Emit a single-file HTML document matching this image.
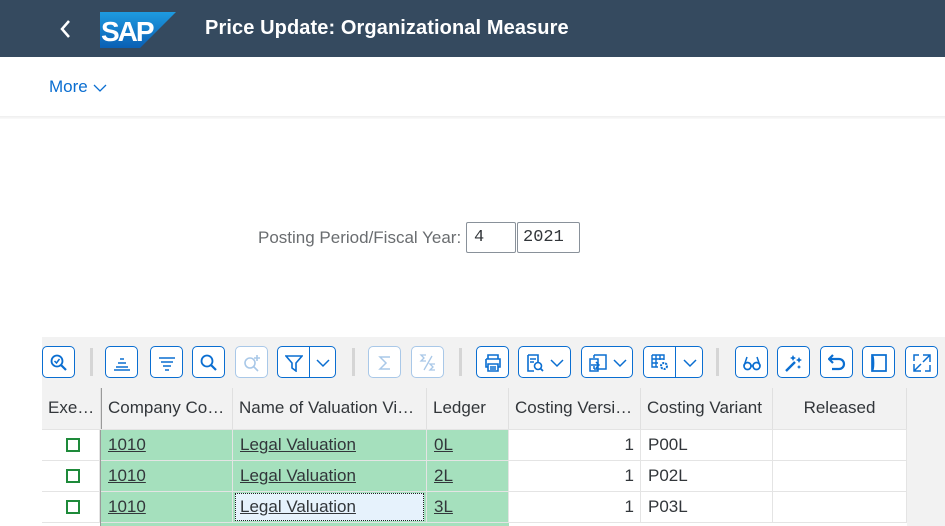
<!DOCTYPE html>
<html><head><meta charset="utf-8"><style>
*{box-sizing:border-box;margin:0;padding:0}
html,body{width:945px;height:526px;overflow:hidden}
body{background:#fff;font-family:"Liberation Sans",sans-serif;position:relative}
.a{position:absolute}
.hdr{left:0;top:0;width:945px;height:57px;background:#354a5f}
.btn{position:absolute;top:346px;height:32px;border:1px solid #0a6ed1;border-radius:5px;background:#fff;color:#0a6ed1}
.btn.dis{border-color:#a9c8e8;color:#a9c8e8}
.btn svg{position:absolute;left:7px;top:7px}
.sep{position:absolute;top:348px;width:3px;height:28px;background:#d5d5d5}
.th{position:absolute;top:388px;height:42px;border-right:1px solid #e0e0e0;font-size:17px;color:#32363a;line-height:40px;padding-left:6px;background:#f2f2f2;white-space:nowrap;overflow:hidden}
.td{position:absolute;height:31px;border-right:1px solid #e4e4e4;border-bottom:1px solid #e4e4e4;font-size:17px;color:#32363a;line-height:30px;padding-left:7px;white-space:nowrap}
.g{background:#a5e0bd}
.g u{color:#32363a}
.cb{position:absolute;left:24px;top:8px;width:14px;height:14px;border:2px solid #1e8a3a}
</style></head><body>
<div class="a hdr"></div>
<svg class="a" style="left:58px;top:19px" width="14" height="20"><path d="M11 2 L4 10 L11 18" stroke="#fff" stroke-width="2.5" fill="none"/></svg>
<svg class="a" style="left:100px;top:12px" width="76" height="36"><defs><linearGradient id="gr" x1="0" y1="0" x2="0" y2="1"><stop offset="0" stop-color="#1e9be0"/><stop offset="1" stop-color="#0a5fb4"/></linearGradient></defs><path d="M0 0 H76 L40 36 H0Z" fill="url(#gr)"/><text x="1" y="29" font-family="Liberation Sans" font-weight="bold" font-size="28" fill="#fff" letter-spacing="-2">SAP</text></svg>
<div class="a" style="left:205px;top:17px;color:#fff;font-weight:bold;font-size:20px;letter-spacing:0.1px">Price Update: Organizational Measure</div>
<div class="a" style="left:49px;top:77px;color:#0a6ed1;font-size:17px">More</div>
<svg class="a" style="left:93px;top:83px" width="14" height="10"><path d="M1 2 L7 8 L13 2" stroke="#0a6ed1" stroke-width="1.3" fill="none"/></svg>
<div class="a" style="left:0;top:116px;width:945px;height:3px;background:linear-gradient(#eee,#fafafa)"></div>
<div class="a" style="left:258px;top:228px;font-size:17px;color:#6a6d70">Posting Period/Fiscal Year:</div>
<div class="a" style="left:466px;top:222px;width:50px;height:31px;border:1px solid #89919a;border-radius:2px;font-family:'Liberation Mono',monospace;font-size:17px;line-height:29px;padding-left:7px;color:#32363a">4</div>
<div class="a" style="left:517px;top:222px;width:63px;height:31px;border:1px solid #89919a;border-radius:2px;font-family:'Liberation Mono',monospace;font-size:17px;line-height:29px;padding-left:5px;color:#32363a">2021</div>
<div class="a" style="left:42px;top:337px;width:903px;height:51px;background:#f2f2f2"></div>
<div class="btn" style="left:42px;width:33px"><svg width="18" height="18"><circle cx="7" cy="7" r="5.5" stroke="currentColor" stroke-width="1.8" fill="none"/><path d="M11 11 L16 16" stroke="currentColor" stroke-width="2.2"/><path d="M4.5 7 L6.5 9 L9.5 5" stroke="currentColor" stroke-width="1.5" fill="none"/></svg></div>
<div class="sep" style="left:90px"></div>
<div class="btn" style="left:105px;width:33px"><svg width="18" height="18"><path d="M7 5h4M5 9h8M3 13h12M1 16h16" stroke="currentColor" stroke-width="1.6"/></svg></div>
<div class="btn" style="left:150px;width:33px"><svg width="18" height="18"><path d="M1 4h16M3 8h12M5 12h8M7 16h4" stroke="currentColor" stroke-width="1.6"/></svg></div>
<div class="btn" style="left:192px;width:33px"><svg width="18" height="18"><circle cx="7" cy="7" r="5.5" stroke="currentColor" stroke-width="1.8" fill="none"/><path d="M11 11 L16 16" stroke="currentColor" stroke-width="2.2"/></svg></div>
<div class="btn dis" style="left:235px;width:33px"><svg width="18" height="18"><circle cx="7" cy="9" r="5" stroke="currentColor" stroke-width="1.6" fill="none"/><path d="M10.5 12.5 L15 17M14 1v6M11 4h6" stroke="currentColor" stroke-width="1.6"/></svg></div>
<div class="btn" style="left:277px;width:59px"><svg width="18" height="18"><path d="M1 2h16l-6 7v8l-4-3V9Z" stroke="currentColor" stroke-width="1.6" fill="none"/></svg><div class="a" style="left:31px;top:0;width:1px;height:30px;background:#0a6ed1"></div><svg style="left:36px" width="18" height="18"><path d="M3 6l6 6 6-6" stroke="currentColor" stroke-width="1.5" fill="none"/></svg></div>
<div class="sep" style="left:352px"></div>
<div class="btn dis" style="left:368px;width:33px"><svg width="18" height="18"><path d="M14 3H4l6 6-6 6h10" stroke="currentColor" stroke-width="1.5" fill="none"/></svg></div>
<div class="btn dis" style="left:411px;width:33px"><svg width="18" height="18"><path d="M7 1H2l3 3-3 3h5M13 2 5 16M16 10h-5l3 3-3 3h5" stroke="currentColor" stroke-width="1.3" fill="none"/></svg></div>
<div class="sep" style="left:459px"></div>
<div class="btn" style="left:476px;width:33px"><svg width="18" height="18"><path d="M4 5V1h10v4M2 5h14v8h-2M4 13H2V5M4 10h10v7H4z M6 13h6M6 15h6" stroke="currentColor" stroke-width="1.6" fill="none"/></svg></div>
<div class="btn" style="left:518px;width:53px"><svg width="18" height="18"><path d="M2 1h10v7M2 1v16h6M4 5h6M4 8h4" stroke="currentColor" stroke-width="1.6" fill="none"/><circle cx="12" cy="12" r="3.5" stroke="currentColor" stroke-width="1.6" fill="none"/><path d="M14.5 14.5 17 17" stroke="currentColor" stroke-width="1.8"/></svg><svg style="left:29px" width="18" height="18"><path d="M3 6l6 6 6-6" stroke="currentColor" stroke-width="1.5" fill="none"/></svg></div>
<div class="btn" style="left:581px;width:52px"><svg width="18" height="18"><path d="M5 1h12v14H5M5 1v3M5 12v3M1 5h8v12H1z M7 8l3 3-3 3M2 11h8" stroke="currentColor" stroke-width="1.5" fill="none"/></svg><svg style="left:29px" width="18" height="18"><path d="M3 6l6 6 6-6" stroke="currentColor" stroke-width="1.5" fill="none"/></svg></div>
<div class="btn" style="left:643px;width:60px"><svg width="20" height="18"><path d="M1 1h12v5M1 1v12h6M1 5h12M1 9h6M5 1v12M9 1v5" stroke="currentColor" stroke-width="1.4" fill="none"/><circle cx="13" cy="12" r="3" stroke="currentColor" stroke-width="2" fill="none" stroke-dasharray="2 1"/></svg><div class="a" style="left:31px;top:0;width:1px;height:30px;background:#0a6ed1"></div><svg style="left:37px" width="18" height="18"><path d="M3 6l6 6 6-6" stroke="currentColor" stroke-width="1.5" fill="none"/></svg></div>
<div class="sep" style="left:716px"></div>
<div class="btn" style="left:735px;width:33px"><svg width="18" height="18"><circle cx="4.5" cy="12" r="3.5" stroke="currentColor" stroke-width="1.7" fill="none"/><circle cx="13.5" cy="12" r="3.5" stroke="currentColor" stroke-width="1.7" fill="none"/><path d="M1 12 4 3M17 12 14 3M8 12h2" stroke="currentColor" stroke-width="1.5" fill="none"/></svg></div>
<div class="btn" style="left:777px;width:33px"><svg width="18" height="18"><path d="M1 17 10 8" stroke="currentColor" stroke-width="2.4"/><path d="M8 1l1 2 2 1-2 1-1 2-1-2-2-1 2-1zM14 3l1 2 2 1-2 1-1 2-1-2-2-1 2-1zM14 11l.7 1.3 1.3.7-1.3.7-.7 1.3-.7-1.3-1.3-.7 1.3-.7z" fill="currentColor"/></svg></div>
<div class="btn" style="left:820px;width:33px"><svg width="18" height="18"><path d="M5 1 1 5l4 4M1 5h10a5 5 0 0 1 0 10H4" stroke="currentColor" stroke-width="2.2" fill="none"/></svg></div>
<div class="btn" style="left:862px;width:33px"><svg width="18" height="18"><path d="M2 1h14v16H2zM2 1c2 1 2 15 0 16" stroke="currentColor" stroke-width="1.7" fill="none"/></svg></div>
<div class="btn" style="left:905px;width:33px"><svg width="18" height="18"><path d="M10 1h7v7M17 1l-7 7M1 10v7h7M1 17l7-7M1 7V1h5M17 11v6h-5" stroke="currentColor" stroke-width="1.5" fill="none"/></svg></div>
<div class="a" style="left:42px;top:388px;width:903px;height:138px;background:#f2f2f2"></div>
<div class="th" style="left:42px;width:59px">Exe…</div>
<div class="th" style="left:101px;width:132px;border-left:1px solid #9a9a9a">Company Co…</div>
<div class="th" style="left:233px;width:194px">Name of Valuation Vi…</div>
<div class="th" style="left:427px;width:82px">Ledger</div>
<div class="th" style="left:509px;width:132px">Costing Versi…</div>
<div class="th" style="left:641px;width:132px">Costing Variant</div>
<div class="th" style="left:773px;width:134px;text-align:center;padding:0">Released</div>
<div class="a" style="left:42px;top:429px;width:865px;height:2px;background:#e4e4e4"></div>
<div class="a" style="left:100px;top:430px;width:1px;height:96px;background:#9a9a9a"></div>

<div class="td" style="left:42px;top:430px;width:58px;background:#fff"><div class="cb"></div></div>
<div class="td g" style="left:101px;top:430px;width:132px"><u>1010</u></div>
<div class="td g" style="left:233px;top:430px;width:194px"><u>Legal Valuation</u></div>
<div class="td g" style="left:427px;top:430px;width:82px"><u>0L</u></div>
<div class="td" style="left:509px;top:430px;width:132px;text-align:right;padding-right:6px;background:#fff">1</div>
<div class="td" style="left:641px;top:430px;width:132px;background:#fff">P00L</div>
<div class="td" style="left:773px;top:430px;width:134px;background:#fff"></div>

<div class="td" style="left:42px;top:461px;width:58px;background:#fff"><div class="cb"></div></div>
<div class="td g" style="left:101px;top:461px;width:132px"><u>1010</u></div>
<div class="td g" style="left:233px;top:461px;width:194px"><u>Legal Valuation</u></div>
<div class="td g" style="left:427px;top:461px;width:82px"><u>2L</u></div>
<div class="td" style="left:509px;top:461px;width:132px;text-align:right;padding-right:6px;background:#fff">1</div>
<div class="td" style="left:641px;top:461px;width:132px;background:#fff">P02L</div>
<div class="td" style="left:773px;top:461px;width:134px;background:#fff"></div>

<div class="td" style="left:42px;top:492px;width:58px;background:#fff"><div class="cb"></div></div>
<div class="td g" style="left:101px;top:492px;width:132px"><u>1010</u></div>
<div class="td g" style="left:233px;top:492px;width:194px"><div class="a" style="left:2px;top:1px;width:189px;height:28px;background:#e6f2fc;border:1px dotted #222"></div><u style="position:relative">Legal Valuation</u></div>
<div class="td g" style="left:427px;top:492px;width:82px"><u>3L</u></div>
<div class="td" style="left:509px;top:492px;width:132px;text-align:right;padding-right:6px;background:#fff">1</div>
<div class="td" style="left:641px;top:492px;width:132px;background:#fff">P03L</div>
<div class="td" style="left:773px;top:492px;width:134px;background:#fff"></div>
<div class="a" style="left:42px;top:523px;width:58px;height:3px;background:#fff"></div>
<div class="a g" style="left:101px;top:523px;width:408px;height:3px"></div>
<div class="a" style="left:509px;top:523px;width:398px;height:3px;background:#fff"></div>
</body></html>
